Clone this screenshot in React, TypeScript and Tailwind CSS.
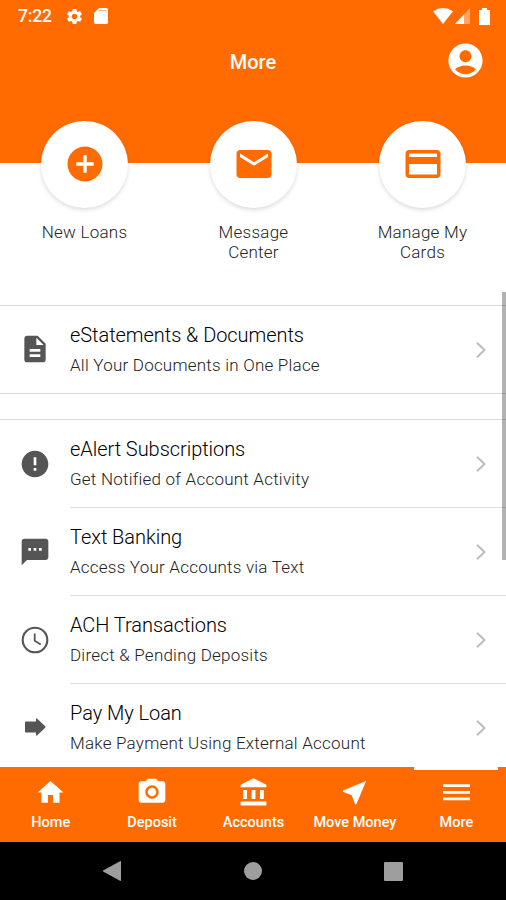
import type { ReactNode } from "react";
import type { IconType } from "react-icons";
import {
  MdAccountBalance,
  MdAccountCircle,
  MdAddCircle,
  MdCameraAlt,
  MdCreditCard,
  MdDescription,
  MdEmail,
  MdError,
  MdHome,
  MdNearMe,
  MdSettings,
  MdTextsms,
} from "react-icons/md";

function StatusBar() {
  return (
    <div className="flex h-8 items-center pl-[18px] pr-[16px]">
      <span className="w-[34px] pt-0.5 text-[17.5px] leading-none font-medium tracking-[-0.2px]">
        7:22
      </span>
      <MdSettings className="ml-[13px] h-[19px] w-[19px]" />
      <svg viewBox="0 0 14 16" className="ml-[10px] h-4 w-[14px]">
        <path
          d="M5 0h7.500A1.500 1.500 0 0 1 14 1.500v13a1.500 1.500 0 0 1-1.500 1.500h-11A1.500 1.500 0 0 1 0 14.500V5z"
          fill="currentColor"
        />
        <path d="M5 2.500h7" stroke="#ff6b00" strokeOpacity=".5" />
      </svg>
      <svg viewBox="0 0 20 16" className="ml-auto h-4 w-5">
        <path d="M0 3.200Q10-3 20 3.200L10 16z" fill="currentColor" />
      </svg>
      <svg viewBox="0 0 15 16" className="ml-[2px] h-4 w-[15px]">
        <path d="M15 0v16H0z" fill="currentColor" opacity=".4" />
        <path d="M9 6.400V16H0z" fill="currentColor" />
      </svg>
      <svg viewBox="0 0 11 17" className="ml-[9px] h-[17px] w-[11px]">
        <path d="M3 0h5v2h3v15H0V2h3z" fill="currentColor" />
      </svg>
    </div>
  );
}

function ClockIcon() {
  return (
    <svg viewBox="0 0 28 28" className="h-7 w-7" fill="none" stroke="currentColor">
      <circle cx="14" cy="14" r="12.300" strokeWidth="2.100" />
      <path d="M13.700 7.500v7.300l6 3.600" strokeWidth="1.800" />
    </svg>
  );
}

function ArrowIcon() {
  return (
    <svg viewBox="0 0 21 18" className="h-[18px] w-[21px]" fill="currentColor">
      <path d="M1 3.500h10V1.200q0-1.600 1.200-.5L20.200 8.300q.7.700 0 1.400L12.200 17.300q-1.200 1.100-1.200-.5V14.500H1q-1 0-1-1v-9q0-1 1-1z" />
    </svg>
  );
}

function MenuIcon() {
  return (
    <svg viewBox="0 0 27 17" className="h-[17px] w-[27px]" fill="currentColor">
      <path d="M0 .2h27v2.800H0zM0 7h27v2.800H0zM0 13.500h27v2.800H0z" />
    </svg>
  );
}

function Shortcut({ icon: Icon, label }: { icon: IconType; label: string }) {
  return (
    <div className="flex flex-1 flex-col items-center">
      <div className="flex h-[87px] w-[87px] items-center justify-center rounded-full bg-white pb-px text-[#ff6b00] shadow-[0_2px_4px_rgba(0,0,0,0.14)]">
        <Icon className="h-[42px] w-[42px]" />
      </div>
      <p className="mt-[14px] w-[110px] text-center text-[17px] leading-5 font-light tracking-[0.25px] text-[#222]">
        {label}
      </p>
    </div>
  );
}

function Row({
  icon,
  title,
  subtitle,
  last,
}: {
  icon: ReactNode;
  title: string;
  subtitle: string;
  last?: boolean;
}) {
  return (
    <div className={`flex shrink-0 ${last ? "h-[87px]" : "h-[88px]"}`}>
      <div className="flex w-[70px] items-center justify-center pb-px text-[#555]">
        {icon}
      </div>
      <div
        className={`flex flex-1 items-center justify-between pt-px pr-5 ${
          last ? "" : "border-b border-[#dedede]"
        }`}
      >
        <div>
          <h2 className="text-[20px] leading-7 font-light tracking-[-0.05px] text-black">
            {title}
          </h2>
          <p className="mt-[2px] text-[17px] leading-7 font-light tracking-[0.22px] text-[#222]">
            {subtitle}
          </p>
        </div>
        <svg
          viewBox="0 0 10 16"
          className="h-4 w-[10px]"
          fill="none"
          stroke="#bdbdbd"
          strokeWidth="2"
        >
          <path d="M1 .8 8.500 8 1 15.200" />
        </svg>
      </div>
    </div>
  );
}

function Tab({
  icon,
  label,
  active,
}: {
  icon: ReactNode;
  label: string;
  active?: boolean;
}) {
  return (
    <div className="flex flex-1 flex-col items-center">
      <div className={`h-[3px] w-[84px] ${active ? "bg-white" : ""}`} />
      <div className="mt-[6px] flex h-8 items-center">{icon}</div>
      <span className="mt-[5px] text-[14.5px] leading-5 font-medium whitespace-nowrap">
        {label}
      </span>
    </div>
  );
}

export default function App() {
  return (
    <div className="flex h-[900px] w-[506px] flex-col overflow-hidden bg-white font-[Roboto,sans-serif]">
      <header className="h-[163px] shrink-0 bg-[#ff6b00] text-white">
        <StatusBar />
        <div className="grid grid-cols-3 items-center px-5">
          <h1 className="col-start-2 text-center text-[20px] leading-[60px] font-medium">
            More
          </h1>
          <MdAccountCircle className="mb-1 h-[41px] w-[41px] justify-self-end" />
        </div>
      </header>

      <main className="relative flex h-[604px] shrink-0 flex-col">
        <section className="-mt-[42px] -mr-px flex h-[184px] shrink-0">
          <Shortcut icon={MdAddCircle} label="New Loans" />
          <Shortcut icon={MdEmail} label="Message Center" />
          <Shortcut icon={MdCreditCard} label="Manage My Cards" />
        </section>

        <section className="h-[89px] shrink-0 border-y border-[#d8d8d8]">
          <Row
            icon={<MdDescription className="h-8 w-8" />}
            title="eStatements & Documents"
            subtitle="All Your Documents in One Place"
            last
          />
        </section>

        <section className="mt-[25px] min-h-0 flex-1 overflow-hidden border-t border-[#d8d8d8]">
          <Row
            icon={<MdError className="h-8 w-8" />}
            title="eAlert Subscriptions"
            subtitle="Get Notified of Account Activity"
          />
          <Row
            icon={<MdTextsms className="h-8 w-8" />}
            title="Text Banking"
            subtitle="Access Your Accounts via Text"
          />
          <Row
            icon={<ClockIcon />}
            title="ACH Transactions"
            subtitle="Direct & Pending Deposits"
          />
          <Row
            icon={<ArrowIcon />}
            title="Pay My Loan"
            subtitle="Make Payment Using External Account"
            last
          />
        </section>

        {/* scrollbar */}
        <div className="absolute top-[129px] right-0 h-[268px] w-1 bg-black/30" />
      </main>

      <nav className="-mr-px flex h-[75px] shrink-0 bg-[#ff6b00] text-white">
        <Tab icon={<MdHome className="h-[31px] w-[31px]" />} label="Home" />
        <Tab icon={<MdCameraAlt className="h-8 w-8" />} label="Deposit" />
        <Tab icon={<MdAccountBalance className="h-[31px] w-[31px]" />} label="Accounts" />
        <Tab icon={<MdNearMe className="h-[31px] w-[31px]" />} label="Move Money" />
        <Tab icon={<MenuIcon />} label="More" active />
      </nav>

      <div className="flex flex-1 items-center justify-between bg-black pr-[103px] pl-[103px] text-[#9e9e9e]">
        <svg viewBox="0 0 18 20" className="h-5 w-[18px]" fill="currentColor">
          <path d="M17 .2q1-.5 1 .8v18q0 1.300-1 .8L.5 10.700q-1-.7 0-1.400z" />
        </svg>
        <div className="h-[18px] w-[18px] rounded-full bg-[#9e9e9e]" />
        <div className="h-[19px] w-[19px] rounded-[1px] bg-[#9e9e9e]" />
      </div>
    </div>
  );
}
